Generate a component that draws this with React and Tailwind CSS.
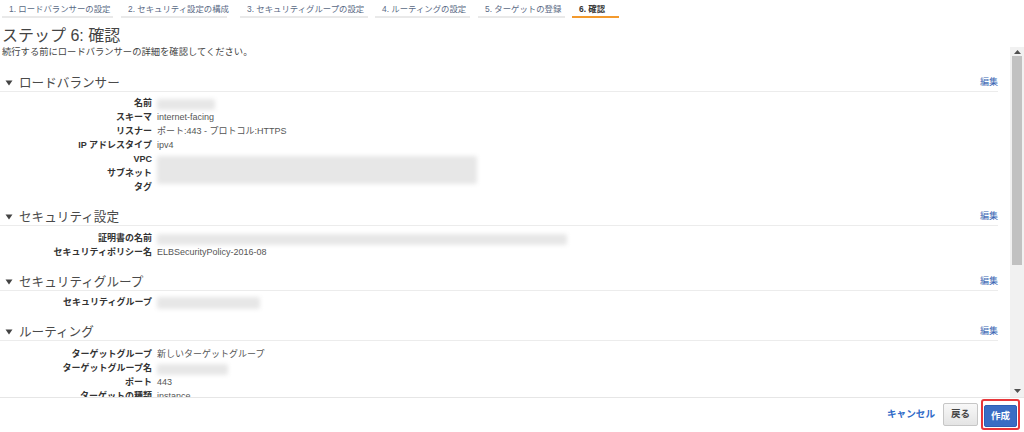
const tabs = [
  { label: '1. ロードバランサーの設定', cls: 'ml-[2px] w-[111px]' },
  { label: '2. セキュリティ設定の構成', cls: 'ml-[8px] w-[106px]' },
  { label: '3. セキュリティグループの設定', cls: 'ml-[13px] w-[128px]' },
  { label: '4. ルーティングの設定', cls: 'ml-[7px] w-[95px]' },
  { label: '5. ターゲットの登録', cls: 'ml-[8px] w-[87px]' },
  { label: '6. 確認', cls: 'ml-[7px] w-[47px]', active: true },
];

function Blur({ className }) {
  return <div className={`rounded-[2px] bg-[#e7e7e7] blur-[2px] ${className}`} />;
}

function Caret() {
  return (
    <svg width="8" height="6" viewBox="0 0 8 6" className="shrink-0">
      <path d="M0.5 0.5 L7.5 0.5 L4 5.5 Z" fill="#444" />
    </svg>
  );
}

function Section({ title, first, pt, children }) {
  return (
    <div className={`pr-[12px] ${first ? 'mt-[13px]' : 'mt-[14px]'}`}>
      <div className="flex h-[17px] items-center border-b border-[#ececec] pl-[5px]">
        <Caret />
        <span className="ml-[6px] text-[12.6px] leading-none text-[#4a4a4a]">{title}</span>
        <span className="ml-auto text-[9px] text-[#3b67b4]">編集</span>
      </div>
      <div className={`grid grid-cols-[152px_1fr] auto-rows-[14px] gap-x-[5px] ${pt}`}>
        {children}
      </div>
    </div>
  );
}

function Label({ children }) {
  return (
    <div className="flex items-center justify-end whitespace-nowrap text-[9px] font-bold text-[#333]">
      {children}
    </div>
  );
}

function Value({ children, className = '' }) {
  return (
    <div className={`flex items-center whitespace-nowrap text-[9px] text-[#555] ${className}`}>
      {children}
    </div>
  );
}

export default function App() {
  return (
    <div className="h-[432px] w-[1024px] overflow-hidden bg-white font-['Liberation_Sans','Noto_Sans_CJK_JP',sans-serif]">
      {/* wizard steps */}
      <div className="flex h-[20px] items-start pt-[2px]">
        {tabs.map((t) => (
          <div
            key={t.label}
            className={`flex h-[16px] shrink-0 items-center border-b-2 pl-[7px] text-[8.4px] whitespace-nowrap ${t.cls} ${
              t.active ? 'border-[#f39a2d] font-bold text-[#333]' : 'border-[#e9e9e9] text-[#5a6a85]'
            }`}
          >
            {t.label}
          </div>
        ))}
      </div>

      <div className="h-[27px] pl-[2px] pt-[6px] text-[16px] leading-[20px] text-[#444]">ステップ 6: 確認</div>

      <div className="flex h-[351px] border-b border-[#e6e6e6]">
        <div className="flex-1 overflow-hidden">
          <div className="pl-[2px] text-[9.3px] leading-[11px] text-[#444]">
            続行する前にロードバランサーの詳細を確認してください。
          </div>

          <div className="h-[4px]" />

          <Section title="ロードバランサー" first pt="pt-[5px]">
            <Label>名前</Label>
            <Value><Blur className="h-[11px] w-[58px]" /></Value>
            <Label>スキーマ</Label>
            <Value>internet-facing</Value>
            <Label>リスナー</Label>
            <Value>ポート:443 - プロトコル:HTTPS</Value>
            <Label>IP アドレスタイプ</Label>
            <Value>ipv4</Value>
            <Label>VPC</Label>
            <div className="row-span-2 pt-[3px]">
              <Blur className="h-[28px] w-[320px]" />
            </div>
            <Label>サブネット</Label>
            <Label>タグ</Label>
            <Value />
          </Section>

          <Section title="セキュリティ設定" pt="pt-[6px]">
            <Label>証明書の名前</Label>
            <Value><Blur className="h-[11px] w-[410px]" /></Value>
            <Label>セキュリティポリシー名</Label>
            <Value>ELBSecurityPolicy-2016-08</Value>
          </Section>

          <Section title="セキュリティグループ" pt="pt-[5px]">
            <Label>セキュリティグループ</Label>
            <Value><Blur className="h-[12px] w-[103px]" /></Value>
          </Section>

          <Section title="ルーティング" pt="pt-[7px]">
            <Label>ターゲットグループ</Label>
            <Value>新しいターゲットグループ</Value>
            <Label>ターゲットグループ名</Label>
            <Value><Blur className="h-[11px] w-[71px]" /></Value>
            <Label>ポート</Label>
            <Value>443</Value>
            <Label>ターゲットの種類</Label>
            <Value>instance</Value>
          </Section>
        </div>

        {/* scrollbar */}
        <div className="flex w-[14px] flex-col bg-[#f1f1f1]">
          <div className="flex h-[9px] items-center justify-center">
            <svg width="7" height="4" viewBox="0 0 7 4"><path d="M0 4 L3.5 0 L7 4 Z" fill="#505050" /></svg>
          </div>
          <div className="mx-[2px] h-[209px] bg-[#c1c1c1]" />
          <div className="flex-1" />
          <div className="flex h-[12px] items-center justify-center">
            <svg width="7" height="4" viewBox="0 0 7 4"><path d="M0 0 L7 0 L3.5 4 Z" fill="#505050" /></svg>
          </div>
        </div>
      </div>

      {/* footer */}
      <div className="flex h-[33px] items-center justify-end pr-[4px]">
        <span className="mr-[8px] text-[9.6px] font-bold text-[#2f6ac7]">キャンセル</span>
        <button className="h-[23px] w-[35px] rounded-[2px] border border-[#c6c6c6] bg-gradient-to-b from-[#f8f8f8] to-[#e4e4e4] text-[9.5px] font-bold text-[#444]">
          戻る
        </button>
        <div className="ml-[3px] rounded-[3px] border-2 border-[#e8373a] p-px">
          <button className="h-[22px] w-[33px] rounded-[2px] border border-[#2d5fb4] bg-[#3a6dc4] text-[9.5px] font-bold text-white">
            作成
          </button>
        </div>
      </div>
    </div>
  );
}
